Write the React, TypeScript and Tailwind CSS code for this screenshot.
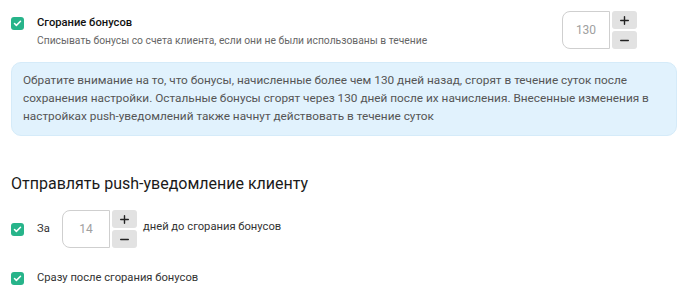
import { Check, Plus, Minus } from "lucide-react";

function Checkbox() {
    return (
        <span className="flex h-[13px] w-[13px] shrink-0 items-center justify-center rounded-[3px] bg-[#27b48a]">
            <Check className="h-[9px] w-[9px] text-white" strokeWidth={4} />
        </span>
    );
}

function Stepper({ value }: { value: number }) {
    return (
        <div className="flex h-[38px] gap-[2px]">
            <div className="flex w-[48px] items-center justify-center rounded-l-[8px] border border-[#cfcfcf] bg-white text-[12px] text-[#a0a0a0]">
                {value}
            </div>
            <div className="flex w-[25px] flex-col gap-[2px]">
                <button className="flex flex-1 items-center justify-center rounded-[3px] bg-[#e2e2e2] text-[#222]">
                    <Plus className="h-[13px] w-[13px]" strokeWidth={2.6} />
                </button>
                <button className="flex flex-1 items-center justify-center rounded-[3px] bg-[#e2e2e2] text-[#222]">
                    <Minus className="h-[13px] w-[13px]" strokeWidth={2.6} />
                </button>
            </div>
        </div>
    );
}

export default function App() {
    return (
        <main className="min-h-screen bg-white px-[11px] pt-[11px] font-['Roboto',sans-serif] text-[#222]">
            {/* burn setting */}
            <div className="flex w-[626px] items-start justify-between">
                <div className="flex items-start gap-[13px] pt-[6px]">
                    <Checkbox />
                    <div className="-mt-[2px]">
                        <div className="text-[11.2px] font-medium leading-[16px] text-[#111]">Сгорание бонусов</div>
                        <div className="mt-[3px] text-[10.3px] leading-[14px] text-[#666]">
                            Списывать бонусы со счета клиента, если они не были использованы в течение
                        </div>
                    </div>
                </div>
                <Stepper value={130} />
            </div>

            {/* notice */}
            <div className="mt-[13px] w-[666px] rounded-[10px] border border-[#d5ebf9] bg-[#e1f2fd] px-[11px] pb-[10px] pt-[8px] text-[11.8px] leading-[18px] text-[#555]">
                Обратите внимание на то, что бонусы, начисленные более чем 130 дней назад, сгорят в течение суток после
                <br />
                сохранения настройки. Остальные бонусы сгорят через 130 дней после их начисления. Внесенные изменения в
                <br />
                настройках push-уведомлений также начнут действовать в течение суток
            </div>

            <h2 className="mt-[36px] text-[16px] leading-[24px] text-[#1a1a1a]">Отправлять push-уведомление клиенту</h2>

            <div className="mt-[14px] flex items-center">
                <Checkbox />
                <span className="ml-[13px] w-[25px] text-[11.2px] text-[#333]">За</span>
                <Stepper value={14} />
                <span className="ml-[6px] -mt-[4px] text-[11.2px] text-[#333]">дней до сгорания бонусов</span>
            </div>

            <div className="mt-[22px] flex items-center gap-[13px]">
                <Checkbox />
                <span className="text-[11.2px] text-[#333]">Сразу после сгорания бонусов</span>
            </div>
        </main>
    );
}
